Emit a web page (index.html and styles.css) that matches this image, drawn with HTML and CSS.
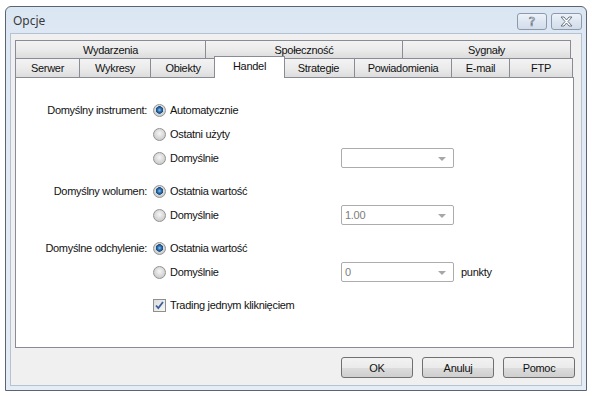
FILE: index.html
```html
<!DOCTYPE html>
<html lang="pl">
<head>
  <meta charset="UTF-8" />
  <title>Opcje</title>
  <link rel="stylesheet" href="styles.css">
</head>
<body>
  <div class="window">
    <div class="titlebar">
      <span class="title">Opcje</span>
      <div class="caption-btns">
        <span class="cbtn help">?</span>
        <span class="cbtn close">
          <svg width="13" height="11" viewBox="0 0 13 11">
            <path d="M1 1h3l2.5 3 2.5-3h3l-4 4.5 4 4.5h-3l-2.5-3-2.5 3h-3l4-4.5z" fill="#fff" stroke="#6a7686" stroke-width="1" stroke-linejoin="round"/>
          </svg>
        </span>
      </div>
    </div>

    <div class="client">
      <!-- tab headers, two rows -->
      <div class="tabs">
        <div class="tabrow back">
          <div class="tab">Wydarzenia</div>
          <div class="tab">Społeczność</div>
          <div class="tab">Sygnały</div>
        </div>
        <div class="tabrow front">
          <div class="tab">Serwer</div>
          <div class="tab">Wykresy</div>
          <div class="tab">Obiekty</div>
          <div class="tab active">Handel</div>
          <div class="tab">Strategie</div>
          <div class="tab">Powiadomienia</div>
          <div class="tab">E-mail</div>
          <div class="tab">FTP</div>
        </div>
      </div>

      <div class="panel">
        <div class="group">
          <div class="row">
            <span class="label">Domyślny instrument:</span>
            <label class="option"><span class="radio checked"></span>Automatycznie</label>
          </div>
          <div class="row">
            <span class="label"></span>
            <label class="option"><span class="radio"></span>Ostatni użyty</label>
          </div>
          <div class="row">
            <span class="label"></span>
            <label class="option"><span class="radio"></span>Domyślnie</label>
            <div class="combo"><span class="value"></span><span class="arrow"></span></div>
          </div>
        </div>

        <div class="group">
          <div class="row">
            <span class="label">Domyślny wolumen:</span>
            <label class="option"><span class="radio checked"></span>Ostatnia wartość</label>
          </div>
          <div class="row">
            <span class="label"></span>
            <label class="option"><span class="radio"></span>Domyślnie</label>
            <div class="combo"><span class="value">1.00</span><span class="arrow"></span></div>
          </div>
        </div>

        <div class="group">
          <div class="row">
            <span class="label">Domyślne odchylenie:</span>
            <label class="option"><span class="radio checked"></span>Ostatnia wartość</label>
          </div>
          <div class="row">
            <span class="label"></span>
            <label class="option"><span class="radio"></span>Domyślnie</label>
            <div class="combo"><span class="value">0</span><span class="arrow"></span></div>
            <span class="unit">punkty</span>
          </div>
        </div>

        <div class="group">
          <div class="row">
            <span class="label"></span>
            <label class="option">
              <span class="checkbox">
                <svg width="9" height="9" viewBox="0 0 9 9"><path d="M1 4.5l2.3 2.6L8 1" fill="none" stroke="#3c5f9e" stroke-width="1.8"/></svg>
              </span>Trading jednym kliknięciem
            </label>
          </div>
        </div>
      </div>

      <div class="buttons">
        <button class="btn">OK</button>
        <button class="btn">Anuluj</button>
        <button class="btn">Pomoc</button>
      </div>
    </div>
  </div>
</body>
</html>
```

FILE: styles.css
```css
body {
  margin: 0;
  background: #fff;
  font-family: "Liberation Sans", Arial, sans-serif;
  font-size: 11px;
  letter-spacing: -0.3px;
  color: #111;
}

.window {
  box-sizing: border-box;
  width: 582px;
  height: 385px;
  margin: 6px 0 0 5px;
  border: 1px solid #5b6470;
  border-radius: 6px 6px 0 0;
  padding: 0 4px 4px;
  background: linear-gradient(#dbe6f3, #dfe9f5 40px, #e4ecf6);
  display: flex;
  flex-direction: column;
}

.titlebar {
  height: 26px;
  display: flex;
  align-items: center;
  justify-content: space-between;
}

.title {
  font-family: "Noto Sans", sans-serif;
  font-size: 12px;
  letter-spacing: 0;
  color: #3a3a3a;
  padding-left: 3px;
}

.caption-btns {
  display: flex;
  gap: 4px;
  margin-top: 2px;
}

.cbtn {
  box-sizing: border-box;
  width: 31px;
  height: 17px;
  border: 1px solid #8d9aab;
  border-radius: 3px;
  background: linear-gradient(#eef3f9, #dde6f1 50%, #d3ddea);
  display: flex;
  align-items: center;
  justify-content: center;
}

.help {
  width: 30px;
  font-family: "DejaVu Sans", sans-serif;
  font-size: 13px;
  color: #fff;
  -webkit-text-stroke: 0.7px #6a7686;
  letter-spacing: 0;
}

.client {
  flex: 1;
  background: #f0f0f0;
  border: 1px solid #b5c2d1;
  padding: 6px 0 0 4px;
  display: flex;
  flex-direction: column;
}

/* tabs */
.tabs {
  width: 558px;
}

.tabrow {
  display: grid;
}

.tabrow.back {
  grid-template-columns: 191px 197px 168px;
  height: 18px;
}

.tabrow.front {
  grid-template-columns: 65px 71px 65px 67px 72px 97px 58px 63px;
  height: 19px;
}

.tab {
  border: 1px solid #898c95;
  border-bottom: none;
  border-left: none;
  background: linear-gradient(#f3f3f3, #ebebeb 50%, #dddddd);
  display: flex;
  align-items: center;
  justify-content: center;
}

.tabrow .tab:first-child {
  border-left: 1px solid #898c95;
}

.tab.active {
  position: relative;
  z-index: 1;
  background: #fff;
  border-left: 1px solid #898c95;
  margin: -2px -2px -1px -2px;
  padding-bottom: 3px;
}

.panel {
  box-sizing: border-box;
  width: 559px;
  height: 271px;
  background: #fff;
  border: 1px solid #898c95;
  padding-top: 20px;
}

.group {
  margin-bottom: 9px;
}

.row {
  height: 24px;
  display: flex;
  align-items: center;
}

.label {
  width: 131px;
  text-align: right;
}

.option {
  width: 188px;
  padding-left: 6px;
  display: flex;
  align-items: center;
  gap: 4px;
}

.radio {
  box-sizing: border-box;
  width: 13px;
  height: 13px;
  border-radius: 50%;
  border: 1px solid #929292;
  background: radial-gradient(circle at 50% 40%, #f6f6f6 0, #e2e2e2 3px, #cfcfcf 6px);
}

.radio.checked {
  background:
    radial-gradient(circle at 50% 45%, #8fc3ea 0, #2d6fb0 2px, #17497d 3.5px, transparent 4px),
    radial-gradient(circle at 50% 40%, #f6f6f6 0, #e2e2e2 3px, #cfcfcf 6px);
}

.checkbox {
  box-sizing: border-box;
  width: 13px;
  height: 13px;
  border: 1px solid #8e8f8f;
  background: linear-gradient(135deg, #dcdcdc, #f8f8f8);
  display: flex;
  align-items: center;
  justify-content: center;
}

.combo {
  box-sizing: border-box;
  width: 113px;
  height: 20px;
  border: 1px solid #acacac;
  border-radius: 2px;
  background: #fff;
  display: flex;
  align-items: center;
  justify-content: space-between;
  padding: 0 7px 0 3px;
}

.value {
  color: #7d7d7d;
}

.arrow {
  width: 0;
  height: 0;
  border-left: 4px solid transparent;
  border-right: 4px solid transparent;
  border-top: 4px solid #a7a7a7;
  margin-top: 2px;
}

.unit {
  margin-left: 7px;
}

.buttons {
  display: flex;
  justify-content: flex-end;
  gap: 9px;
  width: 560px;
  margin-top: 9px;
}

.btn {
  width: 72px;
  height: 21px;
  border: 1px solid #707070;
  border-radius: 3px;
  background: linear-gradient(#f2f2f2, #ebebeb 50%, #dddddd 51%, #cfcfcf);
  font-family: "Liberation Sans", Arial, sans-serif;
  font-size: 11px;
  letter-spacing: -0.3px;
  color: #111;
  padding: 0;
}
```
